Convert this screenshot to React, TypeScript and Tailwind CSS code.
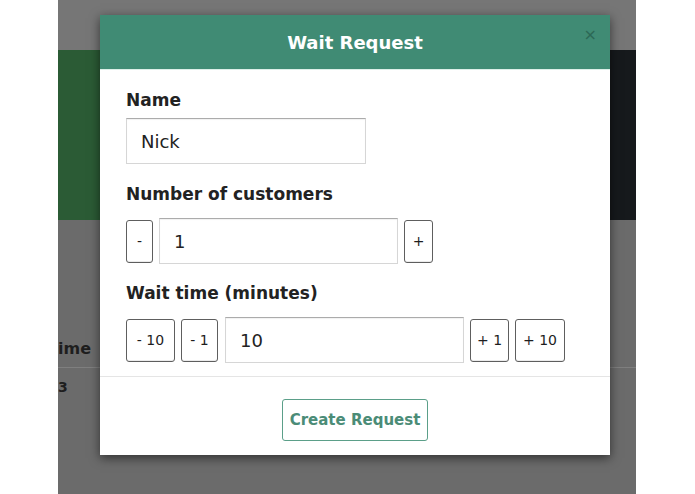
import React from "react";

const font = "font-['DejaVu_Sans',sans-serif]";

function Btn({ children, w }: { children: React.ReactNode; w: string }) {
  return (
    <button
      className={`${w} h-[43px] shrink-0 rounded-[3px] border border-[#5e5e5e] bg-white text-[14px] font-normal text-[#1e1e1e] flex items-center justify-center shadow-[inset_0_-1px_0_rgba(0,0,0,0.08)]`}
    >
      {children}
    </button>
  );
}

function Field({ value, w }: { value: string; w: string }) {
  return (
    <div
      className={`${w} h-[46px] shrink-0 border border-[#d6d6d6] border-t-[#ababab] shadow-[inset_0_1px_1px_rgba(0,0,0,0.06)] flex items-center pl-[14px] text-[18px] text-[#222] font-medium`}
    >
      {value}
    </div>
  );
}

export default function App() {
  return (
    <div className={`w-[695px] h-[494px] bg-white flex ${font}`}>
      <div className="ml-[58px] w-[578px] h-full relative overflow-hidden bg-[#6b6b6b] flex flex-col">
        <div className="h-[50px] bg-[#767676]" />
        <div className="h-[170px] flex">
          <div className="flex-1 bg-[#2b5b35]" />
          <div className="w-[26px] bg-[#16191c]" />
        </div>
        <div className="h-[148px] flex items-end pb-[6px] border-b border-[#7f7f7f]">
          <span className="text-[16px] leading-[24px] font-bold text-[#1e1e1e]">ime</span>
        </div>
        <div className="pt-[9px] text-[14px] leading-[20px] font-bold text-[#1e1e1e]">3</div>

        <div className="absolute left-[42px] top-[15px] w-[510px] h-[440px] bg-white shadow-[0_3px_10px_rgba(0,0,0,0.55)] flex flex-col">
          <div className="h-[55px] bg-[#408b74] border-b border-[#dcefe8] flex items-center justify-center relative">
            <span className="text-[18px] font-bold text-white">Wait Request</span>
            <span className="absolute right-[13px] top-[12px] text-[16px] leading-[16px] font-normal text-[#2c6855]">×</span>
          </div>
          <div className="pl-[26px] pt-[20px] pb-[13px] flex flex-col text-[#222] border-b border-[#e5e5e5]">
            <div className="text-[17px] leading-[20px] font-bold">Name</div>
            <div className="mt-[8px]">
              <Field value="Nick" w="w-[240px]" />
            </div>
            <div className="mt-[20px] text-[17px] leading-[20px] font-bold">Number of customers</div>
            <div className="mt-[14px] flex items-center gap-[6px]">
              <Btn w="w-[27px]">-</Btn>
              <Field value="1" w="w-[239px]" />
              <Btn w="w-[29px]">+</Btn>
            </div>
            <div className="mt-[19px] text-[17px] leading-[20px] font-bold">Wait time (minutes)</div>
            <div className="mt-[14px] flex items-center gap-[6px]">
              <Btn w="w-[49px]">- 10</Btn>
              <Btn w="w-[37px]">- 1</Btn>
              <div className="ml-[1px]">
                <Field value="10" w="w-[239px]" />
              </div>
              <Btn w="w-[39px]">+ 1</Btn>
              <Btn w="w-[50px]">+ 10</Btn>
            </div>
          </div>
          <div className="flex justify-center pt-[22px]">
            <button className="w-[146px] h-[42px] rounded-[3px] border border-[#5b9f89] bg-white text-[15px] font-bold text-[#4b8c77]">
              Create Request
            </button>
          </div>
        </div>
      </div>
    </div>
  );
}
